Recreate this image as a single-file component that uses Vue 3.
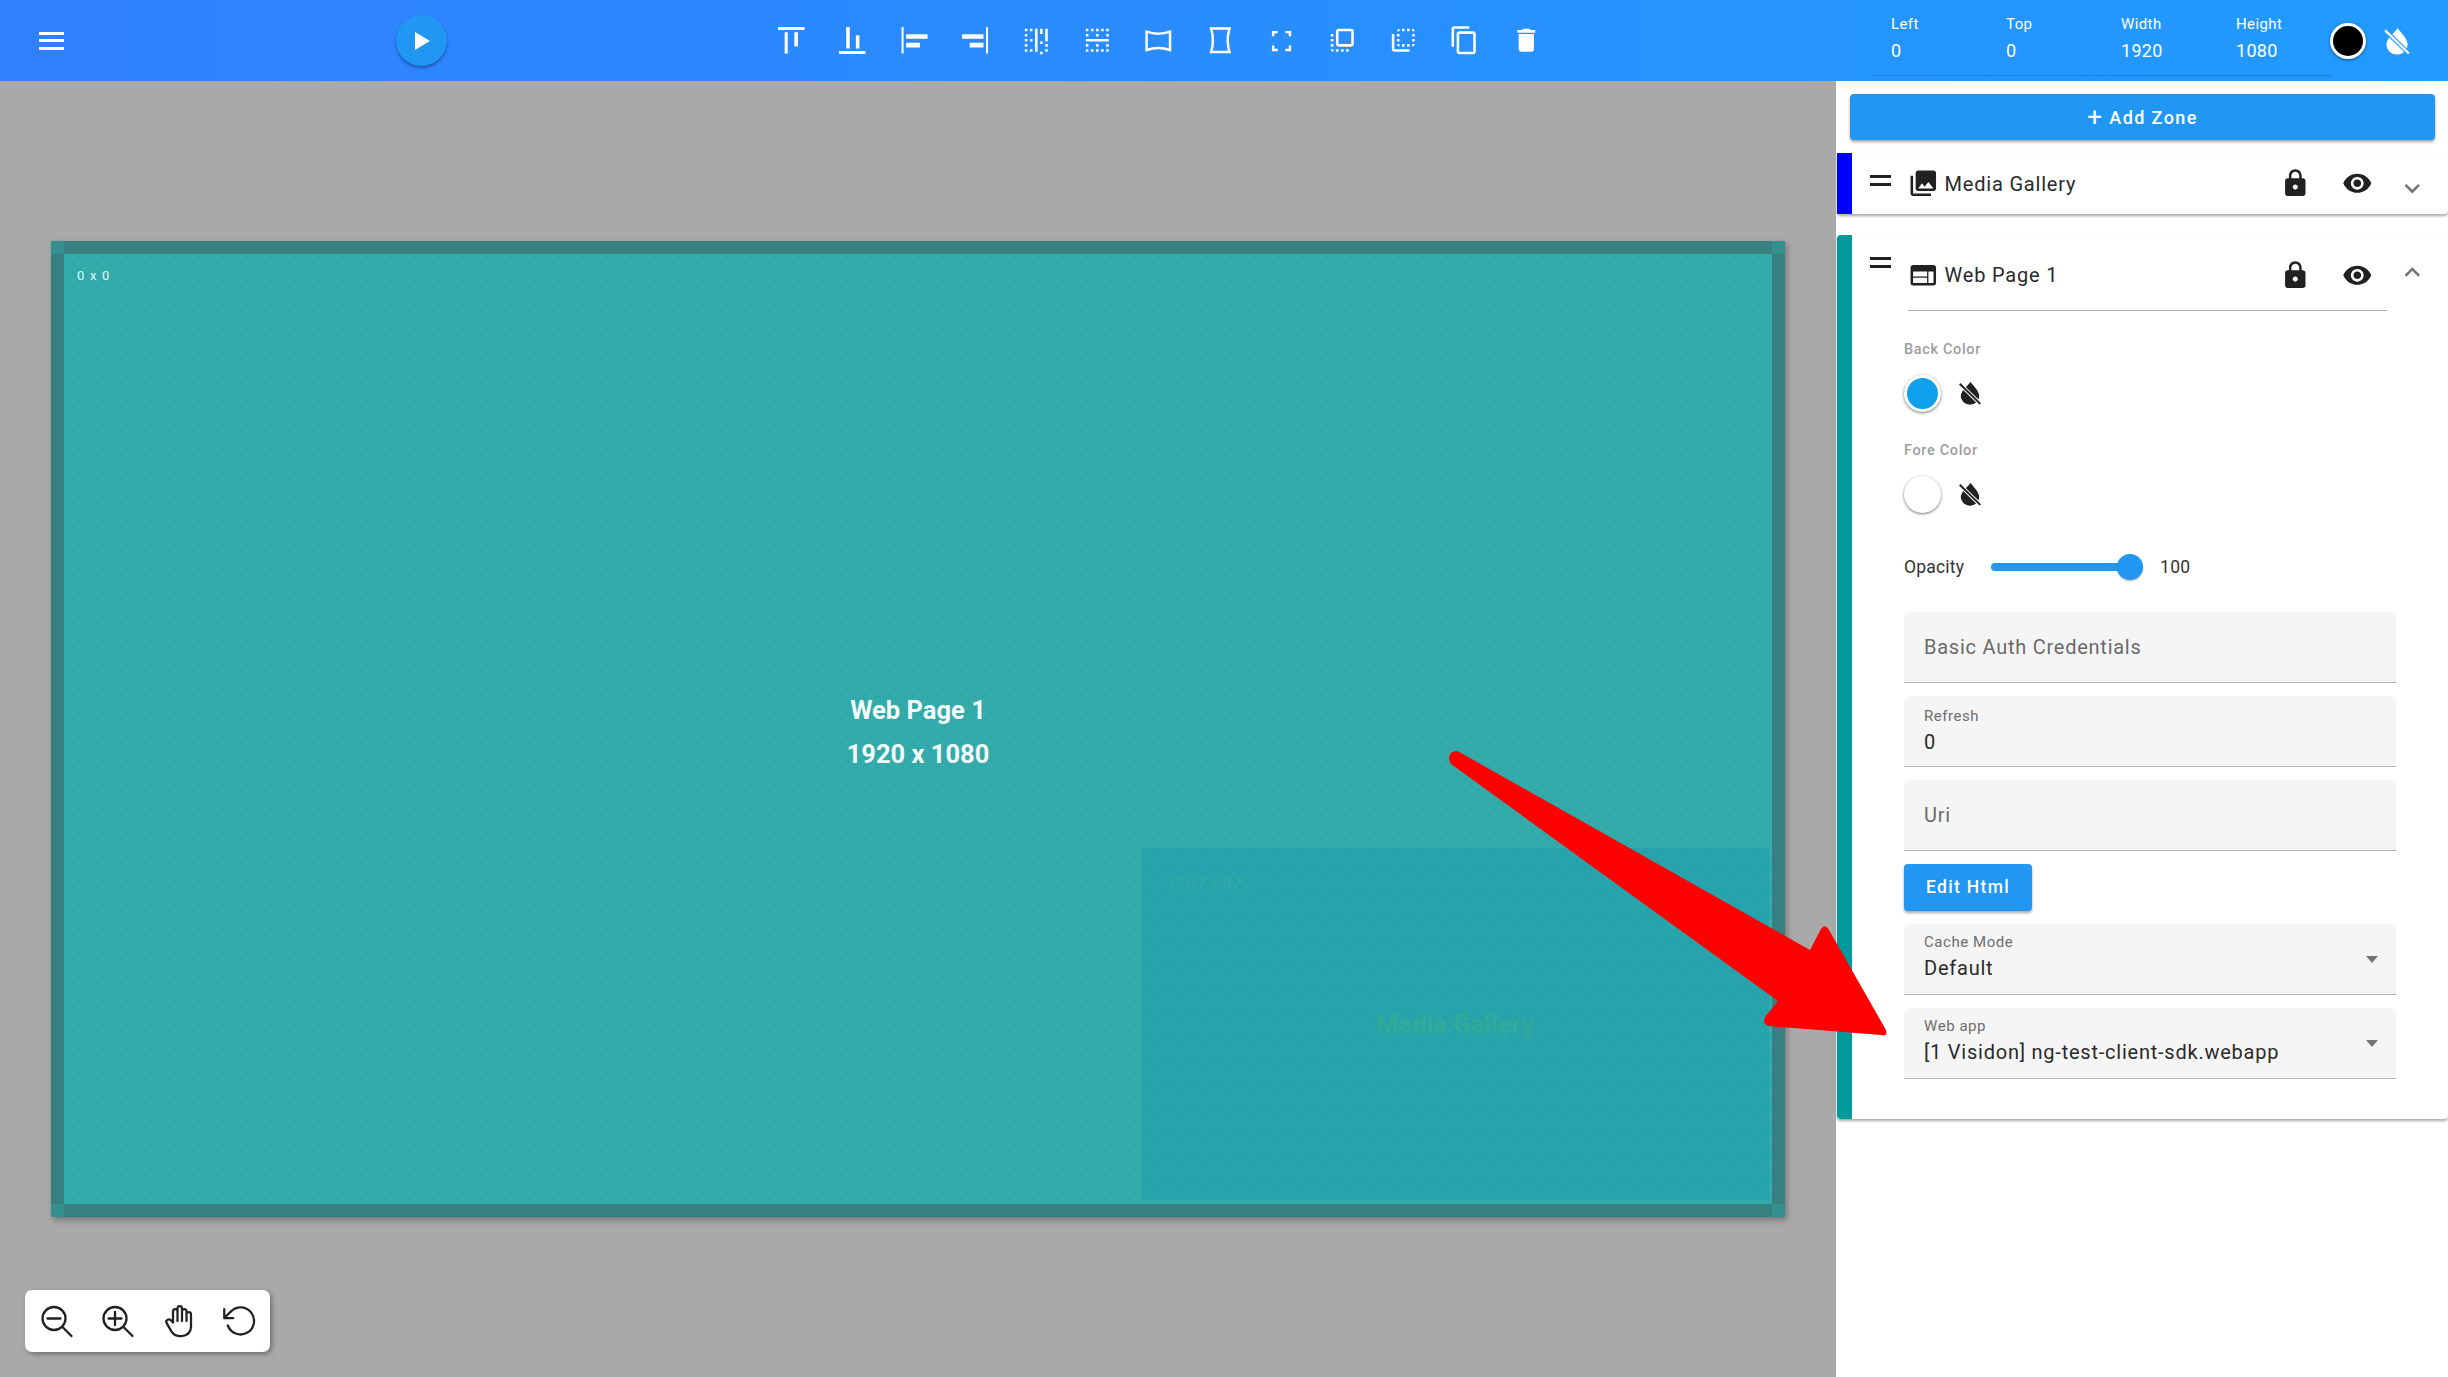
<template>
  <div class="page">
    <header class="topbar">
      <div class="burger"><span></span><span></span><span></span></div>
      <button class="play">
        <svg width="15" height="18" viewBox="0 0 15 18"><path d="M0 0L15 9L0 18z" fill="#fff" /></svg>
      </button>
      <div class="tools">
        <div class="tool" v-for="(tool, i) in tools" :key="i">
          <svg width="30.6" height="30.6" :viewBox="tool.box">
            <path :d="tool.d" :class="tool.line ? 'icon-line' : 'icon-fill'" />
          </svg>
        </div>
      </div>
      <div class="geometry">
        <div class="geo" v-for="g in geometry" :key="g.label">
          <label>{{ g.label }}</label>
          <span>{{ g.value }}</span>
        </div>
      </div>
      <div class="black-dot"></div>
      <svg class="drop-top" width="30" height="30" viewBox="0 0 24 24">
        <path :d="dropPath" fill="#fff" />
        <path d="M2.5 3.5L21.5 22" stroke="#229aff" stroke-width="3.6" />
        <path d="M2.5 3.5L21.5 22" stroke="#fff" stroke-width="1.8" />
      </svg>
    </header>

    <div class="main">
      <section class="stage">
        <div class="screen">
          <i class="corner tl"></i><i class="corner tr"></i><i class="corner bl"></i><i class="corner br"></i>
          <div class="zone-web">
            <span class="size-tag">0 x 0</span>
            <div class="zone-caption">
              <div>Web Page 1</div>
              <div>1920 x 1080</div>
            </div>
          </div>
          <div class="zone-media">
            <span class="media-size">1207 x 672</span>
            <div class="media-caption">Media Gallery</div>
          </div>
        </div>

        <div class="zoom-tools">
          <svg width="36" height="36" viewBox="0 0 36 36" class="tool-stroke">
            <circle cx="15" cy="15.5" r="11.5" /><path d="M8.5 15.5h13M23.5 24l9 9" />
          </svg>
          <svg width="36" height="36" viewBox="0 0 36 36" class="tool-stroke">
            <circle cx="15" cy="15.5" r="11.5" /><path d="M8.5 15.5h13M15 9v13M23.5 24l9 9" />
          </svg>
          <svg width="36" height="36" viewBox="0 0 24 24" class="tool-stroke thin">
            <path d="M8 13v-7.5a1.5 1.5 0 0 1 3 0v6.5M11 5.5v-2a1.5 1.5 0 1 1 3 0v8.5M14 5.5a1.5 1.5 0 0 1 3 0v6.5M17 7.5a1.5 1.5 0 0 1 3 0v8.5a6 6 0 0 1 -6 6h-2h.208a6 6 0 0 1 -5.012 -2.7a69.74 69.74 0 0 1 -.196 -.3c-.312 -.479 -1.407 -2.388 -3.286 -5.728a1.5 1.5 0 0 1 .536 -2.022a1.867 1.867 0 0 1 2.28 .28l1.47 1.47" />
          </svg>
          <svg width="36" height="36" viewBox="0 0 24 24" class="tool-stroke thin">
            <path d="M1.5 4v6h6M3.9 15a9 9 0 1 0 2.1-9.4L1.5 10" />
          </svg>
        </div>
      </section>

      <aside class="panel">
        <button class="add-zone"><b>+</b> Add Zone</button>

        <div class="zone-card">
          <div class="strip blue"></div>
          <div class="card-body">
            <div class="zone-row short">
              <div class="handle"></div>
              <svg class="row-icon" width="30.6" height="30.6" viewBox="0 0 24 24"><path fill="#212121" d="M22 16V4c0-1.1-.9-2-2-2H8c-1.1 0-2 .9-2 2v12c0 1.1.9 2 2 2h12c1.1 0 2-.9 2-2zm-11-4l2.03 2.71L16 11l4 5H8l3-4zM2 6v14c0 1.1.9 2 2 2h14v-2H4V6H2z" /></svg>
              <span class="zone-title">Media Gallery</span>
              <div class="row-btn"><svg width="30.6" height="30.6" viewBox="0 0 24 24"><path fill="#212121" :d="lockPath" /></svg></div>
              <div class="row-btn"><svg width="30.6" height="30.6" viewBox="0 0 24 24"><path fill="#212121" :d="eyePath" /></svg></div>
              <div class="chev down"><svg width="30.6" height="30.6" viewBox="0 0 24 24"><path fill="#757575" d="M16.59 8.59L12 13.17 7.41 8.59 6 10l6 6 6-6z" /></svg></div>
            </div>
          </div>
        </div>

        <div class="zone-card open">
          <div class="strip teal"></div>
          <div class="card-body">
            <div class="zone-row tall">
              <div class="handle"></div>
              <svg class="row-icon" width="30.6" height="30.6" viewBox="0 0 24 24"><path fill="#212121" d="M20 4H4c-1.1 0-1.99.9-1.99 2L2 18c0 1.1.9 2 2 2h16c1.1 0 2-.9 2-2V6c0-1.1-.9-2-2-2zm-5 14H4v-4h11v4zm0-5H4V9h11v4zm5 5h-4V9h4v9z" /></svg>
              <span class="zone-title">Web Page 1</span>
              <div class="row-btn"><svg width="30.6" height="30.6" viewBox="0 0 24 24"><path fill="#212121" :d="lockPath" /></svg></div>
              <div class="row-btn"><svg width="30.6" height="30.6" viewBox="0 0 24 24"><path fill="#212121" :d="eyePath" /></svg></div>
              <div class="chev up"><svg width="30.6" height="30.6" viewBox="0 0 24 24"><path fill="#757575" d="M12 8l-6 6 1.41 1.41L12 10.83l4.59 4.58L18 14z" /></svg></div>
            </div>
            <div class="rule"></div>

            <div class="form">
              <div class="color-label first">Back Color</div>
              <div class="color-row">
                <div class="swatch"><span class="fill"></span></div>
                <svg width="26" height="26" viewBox="0 0 24 24">
                  <path :d="dropPath" fill="#212121" />
                  <path d="M2.5 3.5L21.5 22" stroke="#fff" stroke-width="3.6" />
                  <path d="M2.5 3.5L21.5 22" stroke="#212121" stroke-width="1.8" />
                </svg>
              </div>
              <div class="color-label">Fore Color</div>
              <div class="color-row">
                <div class="swatch"></div>
                <svg width="26" height="26" viewBox="0 0 24 24">
                  <path :d="dropPath" fill="#212121" />
                  <path d="M2.5 3.5L21.5 22" stroke="#fff" stroke-width="3.6" />
                  <path d="M2.5 3.5L21.5 22" stroke="#212121" stroke-width="1.8" />
                </svg>
              </div>
              <div class="opacity">
                <span class="op-label">Opacity</span>
                <div class="slider"><span class="thumb"></span></div>
                <span class="op-value">100</span>
              </div>

              <div class="fields">
                <div class="field empty"><span class="placeholder">Basic Auth Credentials</span></div>
                <div class="field"><span class="small">Refresh</span><span class="val">0</span></div>
                <div class="field empty"><span class="placeholder">Uri</span></div>
                <button class="edit-html">Edit Html</button>
                <div class="field select"><span class="small">Cache Mode</span><span class="val">Default</span><i class="caret"></i></div>
                <div class="field select"><span class="small">Web app</span><span class="val">[1 Visidon] ng-test-client-sdk.webapp</span><i class="caret"></i></div>
              </div>
            </div>
          </div>
        </div>
      </aside>
    </div>

    <svg class="arrow" width="2448" height="1377" viewBox="0 0 2448 1377">
      <path fill="#ff0000" d="M1451 764Q1447 758 1451 753Q1456 749 1461 753L1810 950L1821 929Q1825 923 1829 930L1886 1030Q1888 1037 1881 1035L1769 1026Q1762 1024 1765 1017L1778 1001Z" />
    </svg>
  </div>
</template>

<script setup>
const dropPath = 'M12.5 1.5C15 5.5 20.5 9.5 20.5 15a8.5 7.8 0 0 1-17 0C3.5 9.5 10 5.5 12.5 1.5z'
const lockPath = 'M18 8h-1V6c0-2.76-2.24-5-5-5S7 3.24 7 6v2H6c-1.1 0-2 .9-2 2v10c0 1.1.9 2 2 2h12c1.1 0 2-.9 2-2V10c0-1.1-.9-2-2-2zm-6 9c-1.1 0-2-.9-2-2s.9-2 2-2 2 .9 2 2-.9 2-2 2zm3.1-9H8.9V6c0-1.71 1.39-3.1 3.1-3.1 1.71 0 3.1 1.39 3.1 3.1v2z'
const eyePath = 'M12 4.5C7 4.5 2.73 7.61 1 12c1.73 4.39 6 7.5 11 7.5s9.27-3.11 11-7.5c-1.73-4.39-6-7.5-11-7.5zM12 17c-2.76 0-5-2.24-5-5s2.24-5 5-5 5 2.24 5 5-2.24 5-5 5zm0-8c-1.66 0-3 1.34-3 3s1.34 3 3 3 3-1.34 3-3-1.34-3-3-3z'

const tools = [
  { box: '0 0 30 30', d: 'M2 2h26v3H2zM8.5 7h3v21h-3zM18 7h3.5v14H18z' },
  { box: '0 0 30 30', d: 'M2 25.5h26v3H2zM9 2h3.5v21H9zM18.5 10H22v13h-3.5z' },
  { box: '0 0 30 30', d: 'M2.5 2h2v26h-2zM7 9h21v4.5H7zM7 17.5h13.5V22H7z' },
  { box: '0 0 30 30', d: 'M25.5 2h2v26h-2zM2 9h21v4.5H2zM9.5 17.5H23V22H9.5z' },
  { box: '0 0 24 24', d: 'M3 9h2V7H3v2zm0-4h2V3H3v2zm4 16h2v-2H7v2zm0-8h2v-2H7v2zm-4 0h2v-2H3v2zm0 8h2v-2H3v2zm0-4h2v-2H3v2zM7 5h2V3H7v2zm12 12h2v-2h-2v2zm-8 4h2V3h-2v18zm8 0h2v-2h-2v2zm0-8h2v-2h-2v2zm0-8v2h2V3h-2zm0 6h2V7h-2v2zm-4-4h2V3h-2v2zm0 16h2v-2h-2v2zm0-8h2v-2h-2v2z' },
  { box: '0 0 24 24', d: 'M3 21h2v-2H3v2zM5 7H3v2h2V7zM3 17h2v-2H3v2zm4 4h2v-2H7v2zM5 3H3v2h2V3zm4 0H7v2h2V3zm8 0h-2v2h2V3zm-4 4h-2v2h2V7zm0-4h-2v2h2V3zm6 14h2v-2h-2v2zm-8 4h2v-2h-2v2zm-8-8h18v-2H3v2zM19 3v2h2V3h-2zm0 6h2V7h-2v2zm-8 8h2v-2h-2v2zm4 4h2v-2h-2v2zm4 0h2v-2h-2v2z' },
  { box: '0 0 30 30', d: 'M3.5 6.5Q15 10.5 26.5 6.5V24.5Q15 20.5 3.5 24.5Z', line: true },
  { box: '0 0 30 30', d: 'M6 3.5H24Q20.5 15 24 26.5H6Q9.5 15 6 3.5Z', line: true },
  { box: '0 0 30 30', d: 'M7 11V7h4.5M19 7h4.5v4M23.5 20v4.5H19M11.5 24.5H7V20', line: true },
  { box: '0 0 24 24', d: 'M3 13h2v-2H3v2zm0 4h2v-2H3v2zm2 4v-2H3c0 1.1.89 2 2 2zM3 9h2V7H3v2zm12 12h2v-2h-2v2zm4-18H9c-1.11 0-2 .9-2 2v10c0 1.1.89 2 2 2h10c1.1 0 2-.9 2-2V5c0-1.1-.9-2-2-2zm0 12H9V5h10v10zm-8 6h2v-2h-2v2zm-4 0h2v-2H7v2z' },
  { box: '0 0 24 24', d: 'M9 7H7v2h2V7zm0 4H7v2h2v-2zm0-8c-1.11 0-2 .9-2 2h2V3zm4 12h-2v2h2v-2zm6-12v2h2c0-1.1-.9-2-2-2zm-6 0h-2v2h2V3zM9 17v-2H7c0 1.1.89 2 2 2zm10-4h2v-2h-2v2zm0-4h2V7h-2v2zm0 8c1.1 0 2-.9 2-2h-2v2zM5 7H3v12c0 1.1.89 2 2 2h12v-2H5V7zm10-2h2V3h-2v2zm0 12h2v-2h-2v2z' },
  { box: '0 0 24 24', d: 'M16 1H4c-1.1 0-2 .9-2 2v14h2V3h12V1zm3 4H8c-1.1 0-2 .9-2 2v14c0 1.1.9 2 2 2h11c1.1 0 2-.9 2-2V7c0-1.1-.9-2-2-2zm0 16H8V7h11v14z' },
  { box: '0 0 24 24', d: 'M6 19c0 1.1.9 2 2 2h8c1.1 0 2-.9 2-2V7H6v12zM19 4h-3.5l-1-1h-5l-1 1H5v2h14V4z' }
]

const geometry = [
  { label: 'Left', value: '0' },
  { label: 'Top', value: '0' },
  { label: 'Width', value: '1920' },
  { label: 'Height', value: '1080' }
]
</script>

<style>
html, body { margin: 0; background: #fff; }
</style>

<style scoped>
.page {
  width: 2448px;
  height: 1377px;
  position: relative;
  overflow: hidden;
  display: flex;
  flex-direction: column;
  font-family: Roboto, "Liberation Sans", sans-serif;
  color: #212121;
}

/* top toolbar */
.topbar {
  height: 81px;
  flex: none;
  display: flex;
  align-items: center;
  background: linear-gradient(90deg, #3080ff, #219bff);
  position: relative;
  z-index: 2;
}
.burger {
  width: 25px;
  margin-left: 39px;
  display: flex;
  flex-direction: column;
  gap: 4.5px;
}
.burger span { height: 3px; background: #fff; }
.play {
  width: 51px;
  height: 51px;
  margin-left: 332px;
  border: 0;
  padding: 0 0 0 2px;
  border-radius: 50%;
  background: #2196f3;
  box-shadow: 0 2px 3px rgba(0, 0, 0, .35);
  display: flex;
  align-items: center;
  justify-content: center;
}
.tools { display: flex; margin-left: 314px; width: 797px; flex: none; }
.tool {
  width: 61.2px;
  height: 40px;
  flex: none;
  display: flex;
  align-items: center;
  justify-content: center;
}
.icon-fill { fill: #fff; }
.icon-line { fill: none; stroke: #fff; stroke-width: 2.4; }
.geometry {
  display: flex;
  margin-left: 313px;
  width: 459px;
  height: 76px;
  flex: none;
  align-self: flex-start;
  padding-left: 20px;
  box-sizing: border-box;
  border-bottom: 1.5px solid #1c7ed6;
}
.geo {
  width: 115px;
  flex: none;
  display: flex;
  flex-direction: column;
  color: #fff;
}
.geo label { font-size: 15px; line-height: 18px; margin-top: 15px; letter-spacing: .4px; }
.geo span { font-size: 18px; line-height: 24px; margin-top: 6px; letter-spacing: .3px; }
.black-dot {
  width: 36px;
  height: 36px;
  box-sizing: border-box;
  border: 3px solid #fff;
  border-radius: 50%;
  background: #000;
  box-shadow: 0 1px 3px rgba(0, 0, 0, .5);
  flex: none;
}
.drop-top { margin-left: 16px; flex: none; }

.main { flex: 1; display: flex; min-height: 0; }

/* canvas */
.stage {
  width: 1836px;
  flex: none;
  background: #a9a9a9;
  position: relative;
  padding: 160px 0 0 51px;
  box-sizing: border-box;
}
.screen {
  width: 1708px;
  height: 950px;
  border: 13px solid #368180;
  position: relative;
  box-shadow: 2px 3px 6px rgba(0, 0, 0, .3);
}
.corner { position: absolute; width: 13px; height: 13px; background: #34908f; }
.tl { left: -13px; top: -13px; }
.tr { right: -13px; top: -13px; }
.bl { left: -13px; bottom: -13px; }
.br { right: -13px; bottom: -13px; }
.zone-web {
  position: absolute;
  inset: 0;
  background: repeating-conic-gradient(rgba(255, 255, 255, .022) 0 25%, transparent 0 50%) 0 0 / 12px 12px, #30aaa9;
}
.size-tag {
  position: absolute;
  left: 13px;
  top: 14px;
  font-size: 13px;
  line-height: 16px;
  letter-spacing: 1.2px;
  color: #e3f5f4;
}
.zone-caption {
  position: absolute;
  left: 0;
  right: 0;
  top: 434px;
  text-align: center;
  font-size: 25.5px;
  font-weight: 700;
  line-height: 44px;
  color: #f4fbfb;
}
.zone-media {
  position: absolute;
  left: 1077px;
  top: 594px;
  width: 628px;
  height: 352px;
  background: repeating-conic-gradient(rgba(255, 255, 255, .018) 0 25%, transparent 0 50%) 0 0 / 12px 12px, #26a2aa;
}
.media-size {
  position: absolute;
  left: 26px;
  top: 25px;
  font-size: 17px;
  line-height: 20px;
  color: #30aaa3;
}
.media-caption {
  position: absolute;
  left: 0;
  right: 0;
  top: 160px;
  text-align: center;
  font-size: 25.5px;
  font-weight: 700;
  line-height: 32px;
  color: #31aa98;
}

.zoom-tools {
  position: absolute;
  left: 25px;
  top: 1209px;
  width: 245px;
  height: 62px;
  background: #fff;
  border-radius: 7px;
  box-shadow: 2px 2px 5px rgba(0, 0, 0, .35);
  display: flex;
  align-items: center;
  padding-left: 14px;
  box-sizing: border-box;
  gap: 25px;
}
.tool-stroke { fill: none; stroke: #212121; stroke-width: 2.3; stroke-linecap: round; stroke-linejoin: round; flex: none; }
.tool-stroke.thin { stroke-width: 1.5; }

/* right panel */
.panel {
  flex: 1;
  background: #fff;
  padding-top: 13px;
  box-sizing: border-box;
}
.add-zone {
  display: block;
  width: 585px;
  height: 46px;
  margin-left: 14px;
  border: 0;
  border-radius: 4px;
  background: #2196f3;
  color: #fff;
  font-family: inherit;
  font-size: 18px;
  font-weight: 500;
  letter-spacing: 1.4px;
  box-shadow: 0 2px 3px rgba(0, 0, 0, .35);
}
.add-zone b { font-weight: 400; font-size: 26px; line-height: 20px; vertical-align: -2px; }
.zone-card {
  margin: 13px 0 0 1px;
  display: flex;
  background: #fff;
  border-radius: 4px;
  box-shadow: 0 2px 3px rgba(0, 0, 0, .35);
}
.zone-card.open { margin-top: 21px; }
.strip { width: 15px; flex: none; border-radius: 4px 0 0 4px; }
.strip.blue { background: #0000ff; border-radius: 0; }
.strip.teal { background: #009a9a; }
.card-body { flex: 1; min-width: 0; }
.zone-row { display: flex; align-items: center; padding-left: 18px; padding-right: 12px; position: relative; }
.zone-row.short { height: 61px; }
.zone-row.tall { height: 80px; }
.handle {
  width: 21px;
  height: 5px;
  flex: none;
  border-top: 3px solid #212121;
  border-bottom: 3px solid #212121;
  margin-right: 17px;
  margin-top: -7px;
}
.tall .handle { margin-top: -26px; }
.zone-title {
  flex: 1;
  margin-left: 6px;
  font-size: 20px;
  letter-spacing: .8px;
  color: #2a2a2a;
}
.row-btn { width: 62px; display: flex; justify-content: center; flex: none; }
.chev { width: 48px; display: flex; justify-content: center; flex: none; }
.chev.down { margin-top: 9px; }
.chev.up { margin-top: -6px; }
.rule {
  height: 0;
  margin: -5px 61px 0 56px;
  border-top: 1.5px solid #b0b0b0;
}
.form { padding: 29px 52px 40px 52px; }
.color-label {
  font-size: 14.5px;
  font-weight: 500;
  line-height: 20px;
  letter-spacing: .65px;
  color: #9e9e9e;
  margin-top: 29px;
}
.color-label.first { margin-top: 0; }
.color-row {
  display: flex;
  align-items: center;
  gap: 16px;
  margin-top: 14px;
  height: 38px;
}
.swatch {
  width: 37px;
  height: 37px;
  border-radius: 50%;
  background: #fff;
  box-shadow: 0 1px 3px rgba(0, 0, 0, .55);
  display: flex;
  align-items: center;
  justify-content: center;
  flex: none;
}
.swatch .fill { width: 31px; height: 31px; border-radius: 50%; background: #0fa0ec; }
.opacity {
  display: flex;
  align-items: center;
  height: 26px;
  margin-top: 41px;
  font-size: 17.5px;
  color: #333;
}
.op-label { width: 87px; flex: none; letter-spacing: .2px; }
.slider {
  width: 139px;
  height: 8px;
  border-radius: 4px;
  background: #2196f3;
  position: relative;
  flex: none;
}
.thumb {
  position: absolute;
  right: -13px;
  top: -9px;
  width: 26px;
  height: 26px;
  border-radius: 50%;
  background: #2196f3;
  box-shadow: 0 1px 2px rgba(0, 0, 0, .3);
}
.op-value { margin-left: 30px; letter-spacing: .3px; }
.fields { display: flex; flex-direction: column; gap: 13px; margin-top: 32px; }
.field {
  height: 71px;
  box-sizing: border-box;
  background: #f5f5f5;
  border-radius: 5px 5px 0 0;
  border-bottom: 1.5px solid #b4b4b4;
  padding: 11px 20px 0;
  display: flex;
  flex-direction: column;
  position: relative;
}
.field.select { padding-top: 9px; }
.field.empty { justify-content: center; padding-top: 0; }
.placeholder { font-size: 20px; letter-spacing: .75px; color: #6a6a6a; }
.small { font-size: 15px; line-height: 18px; letter-spacing: .55px; color: #6e6e6e; }
.val { font-size: 20px; line-height: 24px; margin-top: 5px; letter-spacing: .77px; color: #2a2a2a; }
.caret {
  position: absolute;
  right: 18px;
  top: 32px;
  width: 0;
  height: 0;
  border-left: 6.5px solid transparent;
  border-right: 6.5px solid transparent;
  border-top: 7px solid #757575;
}
.edit-html {
  width: 128px;
  height: 47px;
  padding-bottom: 2px;
  border: 0;
  border-radius: 4px;
  background: #2196f3;
  color: #fff;
  font-family: inherit;
  font-size: 17.5px;
  font-weight: 500;
  letter-spacing: 1.3px;
  box-shadow: 0 2px 3px rgba(0, 0, 0, .35);
}

.arrow { position: absolute; left: 0; top: 0; pointer-events: none; z-index: 3; }
</style>
